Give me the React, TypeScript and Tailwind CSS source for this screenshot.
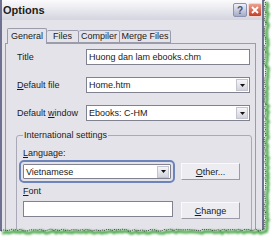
import React from "react";

const face = "bg-[#e4e3ea]";

function seeded(seed: number) {
  let s = seed;
  return () => {
    s = (s * 16807) % 2147483647;
    return (s - 1) / 2147483646;
  };
}

// jagged "torn paper" outline along right and bottom edge
function tornPoints() {
  const r = seeded(42);
  const pts: [number, number][] = [];
  for (let y = 0; y <= 226; y += 2) pts.push([264 + r() * 2.2, y]);
  for (let x = 264; x >= 0; x -= 2) pts.push([x, 229 + r() * 2.2]);
  return pts;
}

function TornEdge() {
  const pts = tornPoints();
  const line = pts.map(([x, y]) => `${x.toFixed(1)},${y.toFixed(1)}`).join(" ");
  const shadow = pts
    .map(([x, y]) => `${(x + 2.2).toFixed(1)},${(y + 2).toFixed(1)}`)
    .join(" ");
  return (
    <svg
      className="absolute left-0 top-0 pointer-events-none"
      width="276"
      height="240"
      viewBox="0 0 276 240"
    >
      <defs>
        <filter id="soft" x="-5%" y="-5%" width="110%" height="110%">
          <feGaussianBlur stdDeviation="0.8" />
        </filter>
      </defs>
      <polygon points={`${line} 0,240 276,240 276,0`} fill="#ffffff" />
      <polyline
        points={shadow}
        fill="none"
        stroke="#2f9a2f"
        strokeWidth="3"
        opacity="0.85"
        filter="url(#soft)"
      />
      <polyline
        points={line}
        fill="none"
        stroke="#2a2a2a"
        strokeWidth="0.8"
        strokeDasharray="1.2 1"
      />
    </svg>
  );
}

function DropArrow({ className }: { className?: string }) {
  return (
    <div
      className={`flex items-center justify-center w-[12px] h-[12px] bg-gradient-to-b from-[#f6f6f9] to-[#d3d3dd] border border-[#c3c4d0] ${className ?? ""}`}
    >
      <svg width="5" height="3" viewBox="0 0 5 3">
        <path d="M0 0H5L2.5 3Z" fill="#111" />
      </svg>
    </div>
  );
}

function Field({
  value,
  drop,
  width = "w-[164px]",
}: {
  value?: string;
  drop?: boolean;
  width?: string;
}) {
  return (
    <div
      className={`flex items-center ${width} h-[16px] bg-white border border-[#80838f]`}
    >
      <span className="flex-1 pl-[2px] truncate leading-[10px]">{value}</span>
      {drop && <DropArrow className="mr-[1px]" />}
    </div>
  );
}

function Btn({ children }: { children: React.ReactNode }) {
  return (
    <button className="flex items-center justify-center w-[59px] h-[17px] bg-[#ededf1] border border-[#fafafc] border-r-[#9b9ba7] border-b-[#9b9ba7] text-[9px] leading-[10px] text-[#1a1a1a]">
      {children}
    </button>
  );
}

function Row({ label, children }: { label: React.ReactNode; children: React.ReactNode }) {
  return (
    <div className="flex items-center h-[16px]">
      <div className="w-[70px] pl-[1px] leading-[10px]">{label}</div>
      {children}
    </div>
  );
}

export default function App() {
  return (
    <div className="relative w-[276px] h-[240px] bg-white overflow-hidden font-['Liberation_Sans',Arial,sans-serif] text-[9px] text-[#1a1a1a]">
      <div className={`flex flex-col w-[264px] h-[240px] ${face} border-l-2 border-r-2 border-[#6f7190]`}>
        {/* title bar */}
        <div className="flex items-center justify-between h-[20px] bg-gradient-to-b from-[#fbfbfd] to-[#d4d4df]">
          <div className="pl-[1px] text-[11px] font-bold text-[#1c1c1c]">Options</div>
          <div className="flex items-center gap-[1px]">
            <div className="flex items-center justify-center w-[14px] h-[14px] rounded-[2px] border border-[#8d92b0] bg-gradient-to-b from-[#eef0f8] to-[#a6acc6] text-[10px] font-bold text-[#4a4f6e]">
              ?
            </div>
            <div className="flex items-center justify-center w-[14px] h-[14px] rounded-[2px] border border-[#f2d6cf] bg-gradient-to-b from-[#eca08e] to-[#c23c26]">
              <svg width="8" height="8" viewBox="0 0 8 8">
                <path d="M1 1L7 7M7 1L1 7" stroke="#fff" strokeWidth="1.8" />
              </svg>
            </div>
          </div>
        </div>

        {/* body */}
        <div className="flex flex-col flex-1 pl-[3px] pr-[6px] pt-[8px]">
          <div className="flex items-end h-[15px] pl-[2px]">
            <div className={`relative z-10 -mb-px flex items-center justify-center w-[40px] h-[16px] ${face} border border-b-0 border-[#9a9cab] rounded-t-[2px]`}>
              General
            </div>
            <div className="flex items-center justify-center w-[32px] h-[13px] border border-l-0 border-[#9a9cab] rounded-t-[2px]">
              Files
            </div>
            <div className="flex items-center justify-center w-[41px] h-[13px] border border-l-0 border-[#9a9cab] rounded-t-[2px]">
              Compiler
            </div>
            <div className="flex items-center justify-center w-[51px] h-[13px] border border-l-0 border-[#9a9cab] rounded-t-[2px]">
              Merge Files
            </div>
          </div>

          <div className="flex flex-col flex-1 border border-[#9a9cab] pl-[10px] pt-[5px]">
            <div className="flex flex-col gap-[12px]">
              <Row label="Title">
                <Field value="Huong dan lam ebooks.chm" />
              </Row>
              <Row
                label={
                  <>
                    <span className="underline">D</span>efault file
                  </>
                }
              >
                <Field value="Home.htm" drop />
              </Row>
              <Row
                label={
                  <>
                    Default <span className="underline">w</span>indow
                  </>
                }
              >
                <Field value="Ebooks: C-HM" drop />
              </Row>
            </div>

            <fieldset className="mt-[9px] w-[236px] border border-[#a9a9b8] rounded-[3px] pl-[6px] pb-[14px]">
              <legend className="px-[1px] leading-[10px]">International settings</legend>
              <div className="mt-[8px] leading-[10px]">
                <span className="underline">L</span>anguage:
              </div>
              <div className="flex items-center mt-[5px] h-[17px]">
                <div className="flex items-center w-[148px] h-[15px] bg-white border border-[#80838f] rounded-[1px] outline-2 outline-offset-[2px] outline-[#6d84bb]">
                  <span className="flex-1 pl-[2px] leading-[10px]">Vietnamese</span>
                  <DropArrow className="mr-[1px] h-[11px]" />
                </div>
                <div className="ml-[10px]">
                  <Btn>
                    <span className="underline">O</span>ther...
                  </Btn>
                </div>
              </div>
              <div className="mt-[6px] leading-[10px]">
                <span className="underline">F</span>ont
              </div>
              <div className="flex items-start mt-[5px] h-[18px]">
                <Field width="w-[150px]" />
                <div className="ml-[8px] mt-[1px]">
                  <Btn>
                    <span className="underline">C</span>hange
                  </Btn>
                </div>
              </div>
            </fieldset>
          </div>
        </div>
      </div>
      <TornEdge />
    </div>
  );
}
